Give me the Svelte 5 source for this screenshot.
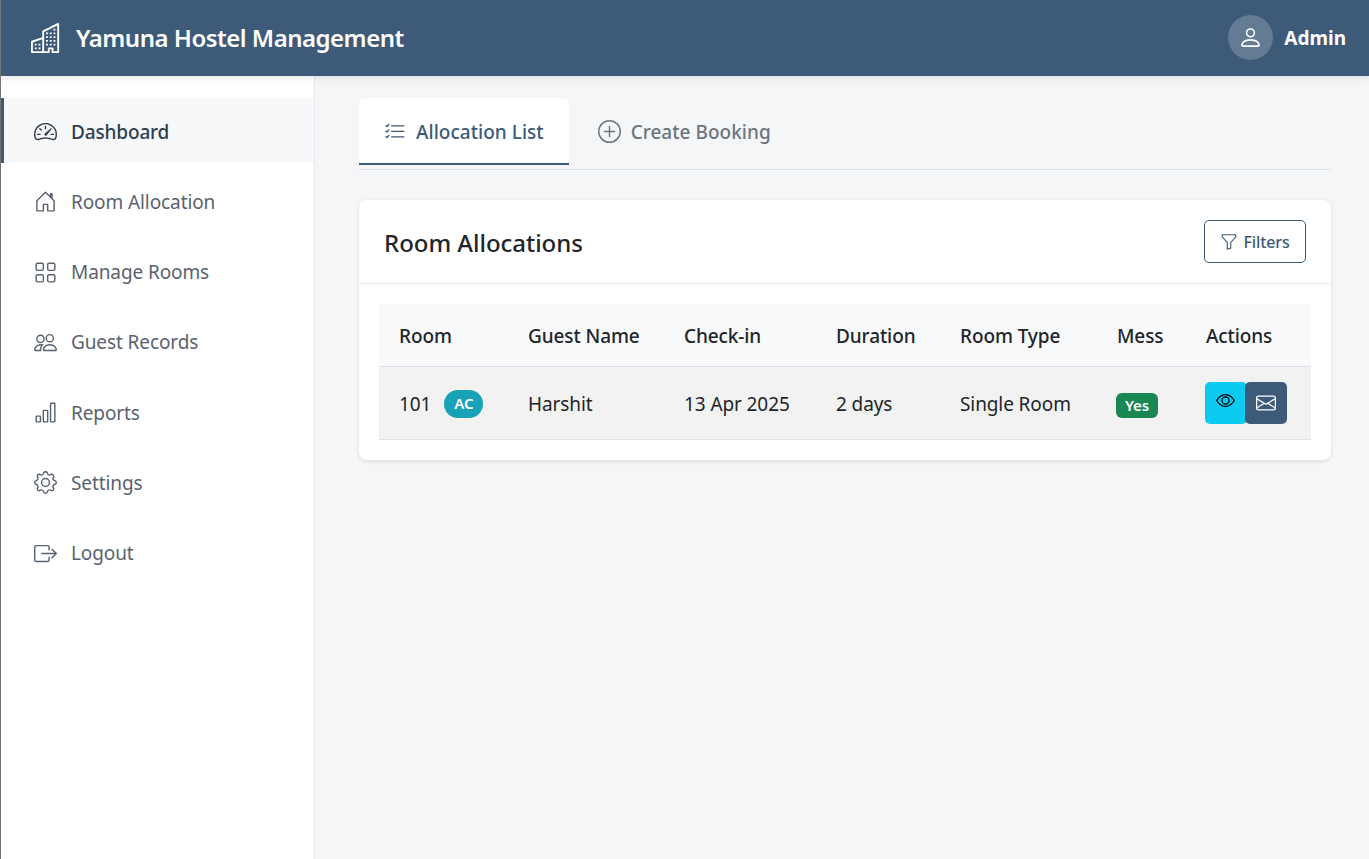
<script>
  const icons = {
    speedometer: ['M8 4a.5.5 0 0 1 .5.5V6a.5.5 0 0 1-1 0V4.5A.5.5 0 0 1 8 4zM3.732 5.732a.5.5 0 0 1 .707 0l.915.914a.5.5 0 1 1-.708.708l-.914-.915a.5.5 0 0 1 0-.707zM2 10a.5.5 0 0 1 .5-.5h1.586a.5.5 0 0 1 0 1H2.5A.5.5 0 0 1 2 10zm9.5 0a.5.5 0 0 1 .5-.5h1.5a.5.5 0 0 1 0 1H12a.5.5 0 0 1-.5-.5zm.754-4.246a.389.389 0 0 0-.527-.02L7.547 9.31a.91.91 0 1 0 1.302 1.258l3.434-4.297a.389.389 0 0 0-.029-.518z', 'M0 10a8 8 0 1 1 15.547 2.661c-.442 1.253-1.845 1.602-2.932 1.25C11.309 13.488 9.475 13 8 13c-1.474 0-3.31.488-4.615.911-1.087.352-2.49.003-2.932-1.25A7.988 7.988 0 0 1 0 10zm8-7a7 7 0 0 0-6.603 9.329c.203.575.923.876 1.68.63C4.397 12.533 6.358 12 8 12s3.604.532 4.923.96c.757.245 1.477-.056 1.68-.631A7 7 0 0 0 8 3z'],
    house: ['M8.354 1.146a.5.5 0 0 0-.708 0l-6 6A.5.5 0 0 0 1.5 7.5v7a.5.5 0 0 0 .5.5h4.5a.5.5 0 0 0 .5-.5v-4h2v4a.5.5 0 0 0 .5.5H14a.5.5 0 0 0 .5-.5v-7a.5.5 0 0 0-.146-.354L13 5.793V2.5a.5.5 0 0 0-.5-.5h-1a.5.5 0 0 0-.5.5v1.293L8.354 1.146ZM2.5 14V7.707l5.5-5.5 5.5 5.5V14H10v-4a.5.5 0 0 0-.5-.5h-3a.5.5 0 0 0-.5.5v4H2.5Z'],
    grid: ['M1 2.5A1.5 1.5 0 0 1 2.5 1h3A1.5 1.5 0 0 1 7 2.5v3A1.5 1.5 0 0 1 5.5 7h-3A1.5 1.5 0 0 1 1 5.5v-3zM2.5 2a.5.5 0 0 0-.5.5v3a.5.5 0 0 0 .5.5h3a.5.5 0 0 0 .5-.5v-3a.5.5 0 0 0-.5-.5h-3zm6.5.5A1.5 1.5 0 0 1 10.5 1h3A1.5 1.5 0 0 1 15 2.5v3A1.5 1.5 0 0 1 13.5 7h-3A1.5 1.5 0 0 1 9 5.5v-3zm1.5-.5a.5.5 0 0 0-.5.5v3a.5.5 0 0 0 .5.5h3a.5.5 0 0 0 .5-.5v-3a.5.5 0 0 0-.5-.5h-3zM1 10.5A1.5 1.5 0 0 1 2.5 9h3A1.5 1.5 0 0 1 7 10.5v3A1.5 1.5 0 0 1 5.5 15h-3A1.5 1.5 0 0 1 1 13.5v-3zm1.5-.5a.5.5 0 0 0-.5.5v3a.5.5 0 0 0 .5.5h3a.5.5 0 0 0 .5-.5v-3a.5.5 0 0 0-.5-.5h-3zm6.5.5A1.5 1.5 0 0 1 10.5 9h3a1.5 1.5 0 0 1 1.5 1.5v3a1.5 1.5 0 0 1-1.5 1.5h-3A1.5 1.5 0 0 1 9 13.5v-3zm1.5-.5a.5.5 0 0 0-.5.5v3a.5.5 0 0 0 .5.5h3a.5.5 0 0 0 .5-.5v-3a.5.5 0 0 0-.5-.5h-3z'],
    people: ['M15 14s1 0 1-1-1-4-5-4-5 3-5 4 1 1 1 1h8Zm-7.978-1A.261.261 0 0 1 7 12.996c.001-.264.167-1.03.76-1.72C8.312 10.629 9.282 10 11 10c1.717 0 2.687.63 3.24 1.276.593.69.758 1.457.76 1.72l-.008.002a.274.274 0 0 1-.014.002H7.022ZM11 7a2 2 0 1 0 0-4 2 2 0 0 0 0 4Zm3-2a3 3 0 1 1-6 0 3 3 0 0 1 6 0ZM6.936 9.28a5.88 5.88 0 0 0-1.23-.247A7.35 7.35 0 0 0 5 9c-4 0-5 3-5 4 0 .667.333 1 1 1h4.216A2.238 2.238 0 0 1 5 13c0-1.01.377-2.042 1.09-2.904.243-.294.526-.569.846-.816ZM4.92 10A5.493 5.493 0 0 0 4 13H1c0-.26.164-1.03.76-1.724.545-.636 1.492-1.256 3.16-1.275ZM1.5 5.5a3 3 0 1 1 6 0 3 3 0 0 1-6 0Zm3-2a2 2 0 1 0 0 4 2 2 0 0 0 0-4Z'],
    chart: ['M4 11H2v3h2v-3zm5-4H7v7h2V7zm5-5v12h-2V2h2zm-2-1a1 1 0 0 0-1 1v12a1 1 0 0 0 1 1h2a1 1 0 0 0 1-1V2a1 1 0 0 0-1-1h-2zM6 7a1 1 0 0 1 1-1h2a1 1 0 0 1 1 1v7a1 1 0 0 1-1 1H7a1 1 0 0 1-1-1V7zm-5 4a1 1 0 0 1 1-1h2a1 1 0 0 1 1 1v3a1 1 0 0 1-1 1H2a1 1 0 0 1-1-1v-3z'],
    gear: ['M8 4.754a3.246 3.246 0 1 0 0 6.492 3.246 3.246 0 0 0 0-6.492zM5.754 8a2.246 2.246 0 1 1 4.492 0 2.246 2.246 0 0 1-4.492 0z', 'M9.796 1.343c-.527-1.79-3.065-1.79-3.592 0l-.094.319a.873.873 0 0 1-1.255.52l-.292-.16c-1.64-.892-3.433.902-2.54 2.541l.159.292a.873.873 0 0 1-.52 1.255l-.319.094c-1.79.527-1.79 3.065 0 3.592l.319.094a.873.873 0 0 1 .52 1.255l-.16.292c-.892 1.64.901 3.434 2.541 2.54l.292-.159a.873.873 0 0 1 1.255.52l.094.319c.527 1.79 3.065 1.79 3.592 0l.094-.319a.873.873 0 0 1 1.255-.52l.292.16c1.64.893 3.434-.902 2.54-2.541l-.159-.292a.873.873 0 0 1 .52-1.255l.319-.094c1.79-.527 1.79-3.065 0-3.592l-.319-.094a.873.873 0 0 1-.52-1.255l.16-.292c.893-1.64-.902-3.433-2.541-2.54l-.292.159a.873.873 0 0 1-1.255-.52l-.094-.319zm-2.633.283c.246-.835 1.428-.835 1.674 0l.094.319a1.873 1.873 0 0 0 2.693 1.115l.291-.16c.764-.415 1.6.42 1.184 1.185l-.159.292a1.873 1.873 0 0 0 1.116 2.692l.318.094c.835.246.835 1.428 0 1.674l-.319.094a1.873 1.873 0 0 0-1.115 2.693l.16.291c.415.764-.42 1.6-1.185 1.184l-.291-.159a1.873 1.873 0 0 0-2.693 1.116l-.094.318c-.246.835-1.428.835-1.674 0l-.094-.319a1.873 1.873 0 0 0-2.692-1.115l-.292.16c-.764.415-1.6-.42-1.184-1.185l.159-.291A1.873 1.873 0 0 0 1.945 8.93l-.319-.094c-.835-.246-.835-1.428 0-1.674l.319-.094A1.873 1.873 0 0 0 3.06 4.377l-.16-.292c-.415-.764.42-1.6 1.185-1.184l.292.159a1.873 1.873 0 0 0 2.692-1.115l.094-.319z'],
    logout: ['M10 12.5a.5.5 0 0 1-.5.5h-8a.5.5 0 0 1-.5-.5v-9a.5.5 0 0 1 .5-.5h8a.5.5 0 0 1 .5.5v2a.5.5 0 0 0 1 0v-2A1.5 1.5 0 0 0 9.5 2h-8A1.5 1.5 0 0 0 0 3.5v9A1.5 1.5 0 0 0 1.5 14h8a1.5 1.5 0 0 0 1.5-1.5v-2a.5.5 0 0 0-1 0v2z', 'M15.854 8.354a.5.5 0 0 0 0-.708l-3-3a.5.5 0 0 0-.708.708L14.293 7.5H5.5a.5.5 0 0 0 0 1h8.793l-2.147 2.146a.5.5 0 0 0 .708.708l3-3z'],
    buildings: ['M14.763.075A.5.5 0 0 1 15 .5v15a.5.5 0 0 1-.5.5h-3a.5.5 0 0 1-.5-.5V14h-1v1.5a.5.5 0 0 1-.5.5h-9a.5.5 0 0 1-.5-.5V10a.5.5 0 0 1 .342-.474L6 7.64V4.5a.5.5 0 0 1 .276-.447l8-4a.5.5 0 0 1 .487.022ZM6 8.694 1 10.36V15h5V8.694ZM7 15h2v-1.5a.5.5 0 0 1 .5-.5h2a.5.5 0 0 1 .5.5V15h2V1.309l-7 3.5V15Z', 'M2 11h1v1H2v-1Zm2 0h1v1H4v-1Zm-2 2h1v1H2v-1Zm2 0h1v1H4v-1Zm4-4h1v1H8V9Zm2 0h1v1h-1V9Zm-2 2h1v1H8v-1Zm2 0h1v1h-1v-1Zm2-2h1v1h-1V9Zm0 2h1v1h-1v-1ZM8 7h1v1H8V7Zm2 0h1v1h-1V7Zm2 0h1v1h-1V7ZM8 5h1v1H8V5Zm2 0h1v1h-1V5Zm2 0h1v1h-1V5Zm0-2h1v1h-1V3Z'],
    person: ['M8 8a3 3 0 1 0 0-6 3 3 0 0 0 0 6Zm2-3a2 2 0 1 1-4 0 2 2 0 0 1 4 0Zm4 8c0 1-1 1-1 1H3s-1 0-1-1 1-4 6-4 6 3 6 4Zm-1-.004c-.001-.246-.154-.986-.832-1.664C11.516 10.68 10.289 10 8 10c-2.29 0-3.516.68-4.168 1.332-.678.678-.83 1.418-.832 1.664h10Z'],
    list: ['M5 11.5a.5.5 0 0 1 .5-.5h9a.5.5 0 0 1 0 1h-9a.5.5 0 0 1-.5-.5zm0-4a.5.5 0 0 1 .5-.5h9a.5.5 0 0 1 0 1h-9a.5.5 0 0 1-.5-.5zm0-4a.5.5 0 0 1 .5-.5h9a.5.5 0 0 1 0 1h-9a.5.5 0 0 1-.5-.5zM3.854 2.146a.5.5 0 0 1 0 .708l-1.5 1.5a.5.5 0 0 1-.708 0l-.5-.5a.5.5 0 1 1 .708-.708L2 3.293l1.146-1.147a.5.5 0 0 1 .708 0zm0 4a.5.5 0 0 1 0 .708l-1.5 1.5a.5.5 0 0 1-.708 0l-.5-.5a.5.5 0 1 1 .708-.708L2 7.293l1.146-1.147a.5.5 0 0 1 .708 0zm0 4a.5.5 0 0 1 0 .708l-1.5 1.5a.5.5 0 0 1-.708 0l-.5-.5a.5.5 0 0 1 .708-.708l.146.147 1.146-1.147a.5.5 0 0 1 .708 0z'],
    plus: ['M8 15A7 7 0 1 1 8 1a7 7 0 0 1 0 14zm0 1A8 8 0 1 0 8 0a8 8 0 0 0 0 16z', 'M8 4a.5.5 0 0 1 .5.5v3h3a.5.5 0 0 1 0 1h-3v3a.5.5 0 0 1-1 0v-3h-3a.5.5 0 0 1 0-1h3v-3A.5.5 0 0 1 8 4z'],
    funnel: ['M1.5 1.5A.5.5 0 0 1 2 1h12a.5.5 0 0 1 .5.5v2a.5.5 0 0 1-.128.334L10 8.692V13.5a.5.5 0 0 1-.342.474l-3 1A.5.5 0 0 1 6 14.5V8.692L1.628 3.834A.5.5 0 0 1 1.5 3.5v-2zm1 .5v1.308l4.372 4.858A.5.5 0 0 1 7 8.5v5.306l2-.666V8.5a.5.5 0 0 1 .128-.334L13.5 3.308V2h-11z'],
    eye: ['M16 8s-3-5.5-8-5.5S0 8 0 8s3 5.5 8 5.5S16 8 16 8zM1.173 8a13.133 13.133 0 0 1 1.66-2.043C4.12 4.668 5.88 3.5 8 3.5c2.12 0 3.879 1.168 5.168 2.457A13.133 13.133 0 0 1 14.828 8c-.058.087-.122.183-.195.288-.335.48-.83 1.12-1.465 1.755C11.879 11.332 10.119 12.5 8 12.5c-2.12 0-3.879-1.168-5.168-2.457A13.134 13.134 0 0 1 1.172 8z', 'M8 5.5a2.5 2.5 0 1 0 0 5 2.5 2.5 0 0 0 0-5zM4.5 8a3.5 3.5 0 1 1 7 0 3.5 3.5 0 0 1-7 0z'],
    envelope: ['M0 4a2 2 0 0 1 2-2h12a2 2 0 0 1 2 2v8a2 2 0 0 1-2 2H2a2 2 0 0 1-2-2V4Zm2-1a1 1 0 0 0-1 1v.217l7 4.2 7-4.2V4a1 1 0 0 0-1-1H2Zm13 2.383-4.708 2.825L15 11.105V5.383Zm-.034 6.876-5.64-3.471L8 9.583l-1.326-.795-5.64 3.47A1 1 0 0 0 2 13h12a1 1 0 0 0 .966-.741ZM1 11.105l4.708-2.897L1 5.383v5.722Z']
  };

  const nav = [
    { label: 'Dashboard', icon: 'speedometer', active: true },
    { label: 'Room Allocation', icon: 'house' },
    { label: 'Manage Rooms', icon: 'grid' },
    { label: 'Guest Records', icon: 'people' },
    { label: 'Reports', icon: 'chart' },
    { label: 'Settings', icon: 'gear' },
    { label: 'Logout', icon: 'logout' }
  ];

  const columns = ['Room', 'Guest Name', 'Check-in', 'Duration', 'Room Type', 'Mess', 'Actions'];
  const colWidths = [129, 156, 152, 124, 157, 89, 125];
</script>

{#snippet icon(name, size)}
  <svg width={size} height={size} viewBox="0 0 16 16" fill="currentColor" aria-hidden="true">
    {#each icons[name] as d}<path {d} />{/each}
  </svg>
{/snippet}

<div class="page">
  <header class="topbar">
    <div class="brand">
      {@render icon('buildings', 30)}
      <span>Yamuna Hostel Management</span>
    </div>
    <div class="user">
      <span class="avatar">{@render icon('person', 25)}</span>
      <span class="user-name">Admin</span>
    </div>
  </header>

  <div class="body">
    <aside class="sidebar">
      {#each nav as item}
        <a class="nav-item" class:active={item.active} href="#top">
          {@render icon(item.icon, 23)}
          <span>{item.label}</span>
        </a>
      {/each}
    </aside>

    <main class="content">
      <div class="tabs">
        <button class="tab active">{@render icon('list', 22)}<span>Allocation List</span></button>
        <button class="tab">{@render icon('plus', 23)}<span>Create Booking</span></button>
      </div>

      <section class="card">
        <div class="card-head">
          <h2>Room Allocations</h2>
          <button class="filters">{@render icon('funnel', 18)}<span>Filters</span></button>
        </div>
        <div class="card-body">
          <table>
            <colgroup>
              {#each colWidths as w}<col style="width: {w}px" />{/each}
            </colgroup>
            <thead>
              <tr>{#each columns as c}<th>{c}</th>{/each}</tr>
            </thead>
            <tbody>
              <tr>
                <td><div class="room-cell"><span>101</span><span class="badge ac">AC</span></div></td>
                <td>Harshit</td>
                <td>13 Apr 2025</td>
                <td>2 days</td>
                <td>Single Room</td>
                <td class="mess"><span class="badge yes">Yes</span></td>
                <td class="actions">
                  <button class="act view">{@render icon('eye', 19)}</button><button class="act mail">{@render icon('envelope', 20)}</button>
                </td>
              </tr>
            </tbody>
          </table>
        </div>
      </section>
    </main>
  </div>
</div>

<style>
  :global(body) {
    margin: 0;
    background: #757575;
    font-family: "Noto Sans", "Open Sans", sans-serif;
  }

  .page {
    margin-left: 1px;
    height: 859px;
    display: flex;
    flex-direction: column;
    background: #f5f6f8;
    overflow: hidden;
  }

  .topbar {
    height: 76px;
    flex: none;
    background: #3d5a78;
    color: #fff;
    display: flex;
    align-items: center;
    justify-content: space-between;
    padding: 0 23px 0 30px;
    box-shadow: 0 2px 8px rgba(0, 0, 0, 0.1);
    position: relative;
    z-index: 2;
  }

  .brand {
    display: flex;
    align-items: center;
    gap: 15px;
    font-size: 24px;
    font-weight: 600;
    letter-spacing: -0.5px;
  }

  .brand span {
    margin-top: -2px;
  }

  .user {
    display: flex;
    align-items: center;
    gap: 11px;
    font-size: 19px;
    font-weight: 700;
  }

  .user-name {
    margin-top: -1px;
  }

  .avatar {
    width: 45px;
    height: 45px;
    border-radius: 50%;
    background: rgba(255, 255, 255, 0.2);
    display: flex;
    align-items: center;
    justify-content: center;
    margin-top: -1px;
  }

  .body {
    flex: 1;
    display: flex;
    min-height: 0;
  }

  .sidebar {
    width: 314px;
    flex: none;
    box-sizing: border-box;
    background: #fff;
    border-right: 1px solid #e6e8eb;
    padding-top: 22px;
    display: flex;
    flex-direction: column;
    gap: 5.3px;
  }

  .nav-item {
    height: 65px;
    box-sizing: border-box;
    display: flex;
    align-items: center;
    gap: 14px;
    padding: 2px 0 0 30px;
    border-left: 3px solid transparent;
    color: #596370;
    font-size: 19px;
    letter-spacing: -0.1px;
    text-decoration: none;
  }

  .nav-item.active {
    background: #f7f8fa;
    border-left-color: #3d5a78;
    color: #2c3e50;
    font-weight: 500;
    letter-spacing: -0.15px;
  }

  .content {
    flex: 1;
    padding: 22px 38px 0 44px;
    min-width: 0;
  }

  .tabs {
    display: flex;
    gap: 4px;
    height: 72px;
    box-sizing: border-box;
    border-bottom: 1px solid #dee2e6;
    margin-bottom: 30px;
  }

  .tab {
    height: 67px;
    border: 0;
    background: none;
    padding: 2px 25px 0;
    display: flex;
    align-items: center;
    gap: 10px;
    font-family: inherit;
    font-size: 19px;
    font-weight: 500;
    letter-spacing: 0.03px;
    color: #6c757d;
    border-radius: 6px 6px 0 0;
    border-bottom: 2px solid transparent;
  }

  .tab.active {
    background: #fff;
    color: #3d5a78;
    border-bottom-color: #3d5a78;
  }

  .card {
    background: #fff;
    border-radius: 8px;
    box-shadow: 0 1px 4px rgba(0, 0, 0, 0.12);
  }

  .card-head {
    height: 84px;
    box-sizing: border-box;
    padding: 0 25px;
    display: flex;
    align-items: center;
    justify-content: space-between;
    border-bottom: 1px solid #e6e8eb;
  }

  h2 {
    margin: 2px 0 0;
    font-size: 24px;
    font-weight: 500;
    letter-spacing: -0.03px;
    color: #212529;
  }

  .filters {
    width: 102px;
    height: 43px;
    border: 1px solid #3d5a78;
    border-radius: 5px;
    background: #fff;
    color: #3d5a78;
    display: flex;
    align-items: center;
    justify-content: center;
    gap: 5px;
    font-family: inherit;
    font-size: 16px;
    font-weight: 500;
    letter-spacing: -0.1px;
    padding: 0;
  }

  .card-body {
    padding: 20px;
  }

  table {
    width: 100%;
    table-layout: fixed;
    border-collapse: collapse;
    color: #212529;
    font-size: 19px;
    letter-spacing: -0.1px;
  }

  th {
    text-align: left;
    height: 62px;
    padding: 2px 20px 0;
    box-sizing: border-box;
    background: #f8f9fa;
    font-weight: 500;
    border-bottom: 1px solid #dee2e6;
  }

  td {
    height: 73px;
    padding: 2px 20px 0;
    box-sizing: border-box;
    background: #f2f2f2;
    border-bottom: 1px solid #dee2e6;
    white-space: nowrap;
  }

  .room-cell {
    display: flex;
    align-items: center;
    gap: 13px;
  }

  .badge {
    color: #fff;
    font-weight: 600;
    font-size: 15px;
    letter-spacing: -0.2px;
    line-height: 1;
  }

  .ac {
    background: #17a2b8;
    border-radius: 14px;
    padding: 6.5px 10px;
  }

  .yes {
    display: block;
    width: fit-content;
    box-sizing: border-box;
    height: 25px;
    background: #198754;
    border-radius: 6px;
    padding: 5px 9px;
    margin-top: 3px;
  }

  .mess {
    padding-left: 19px;
  }

  .actions {
    padding: 0 0 0 19px;
    font-size: 0;
  }

  .act {
    width: 42px;
    height: 42px;
    border: 0;
    padding: 0;
    border-radius: 5px;
    vertical-align: middle;
    display: inline-flex;
    align-items: center;
    justify-content: center;
  }

  .view {
    background: #0dcaf0;
    color: #000;
  }

  .view :global(svg) {
    margin: -4px 2px 0 0;
  }

  .mail {
    background: #3d5a78;
    color: #fff;
    margin-left: -2px;
  }
</style>
